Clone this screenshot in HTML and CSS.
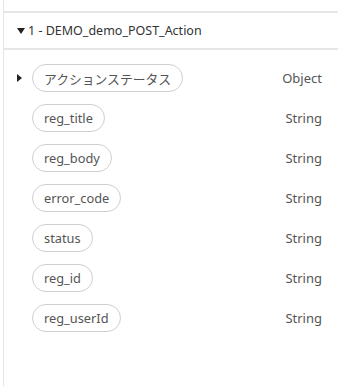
FILE: index.html
```html
<!DOCTYPE html>
<html lang="ja">
<head>
    <meta charset="UTF-8">
    <title>DEMO_demo_POST_Action</title>
    <link rel="stylesheet" href="styles.css">
</head>
<body>
    <div class="panel">
        <div class="group-header">
            <span class="caret down"></span>
            <span class="group-title">1 - DEMO_demo_POST_Action</span>
        </div>
        <ul class="fields">
            <li class="field">
                <span class="toggle"><span class="caret right"></span></span>
                <span class="pill">アクションステータス</span>
                <span class="type">Object</span>
            </li>
            <li class="field">
                <span class="toggle"></span>
                <span class="pill">reg_title</span>
                <span class="type">String</span>
            </li>
            <li class="field">
                <span class="toggle"></span>
                <span class="pill">reg_body</span>
                <span class="type">String</span>
            </li>
            <li class="field">
                <span class="toggle"></span>
                <span class="pill">error_code</span>
                <span class="type">String</span>
            </li>
            <li class="field">
                <span class="toggle"></span>
                <span class="pill">status</span>
                <span class="type">String</span>
            </li>
            <li class="field">
                <span class="toggle"></span>
                <span class="pill">reg_id</span>
                <span class="type">String</span>
            </li>
            <li class="field">
                <span class="toggle"></span>
                <span class="pill">reg_userId</span>
                <span class="type">String</span>
            </li>
        </ul>
    </div>
</body>
</html>
```

FILE: styles.css
```css
body {
    margin: 0;
    background-color: #fff;
    font-family: "Noto Sans", "Noto Sans CJK JP", sans-serif;
    font-size: 13px;
    color: #444;
}

.panel {
    margin-left: 3px;
    height: 386px;
    box-sizing: border-box;
    padding-top: 11px;
    border-left: 1px solid #e6e6e6;
}

.group-header {
    display: flex;
    align-items: center;
    height: 35px;
    padding-left: 13px;
    border-top: 2px solid #e4e6e8;
    border-bottom: 2px solid #e4e6e8;
}

.group-title {
    margin-left: 3px;
    font-size: 12.5px;
    color: #333;
}

.caret {
    display: inline-block;
    width: 0;
    height: 0;
}

.caret.down {
    border-left: 4.5px solid transparent;
    border-right: 4.5px solid transparent;
    border-top: 6px solid #222;
}

.caret.right {
    border-top: 4px solid transparent;
    border-bottom: 4px solid transparent;
    border-left: 5px solid #222;
}

.fields {
    list-style: none;
    margin: 0;
    padding: 14px 16px 0 13px;
    display: flex;
    flex-direction: column;
    gap: 12px;
}

.field {
    display: flex;
    align-items: center;
    height: 28px;
}

.toggle {
    display: flex;
    align-items: center;
    width: 15px;
}

.pill {
    display: flex;
    align-items: center;
    height: 28px;
    box-sizing: border-box;
    padding: 0 11px;
    border: 1px solid #cfcfcf;
    border-radius: 14px;
    font-size: 12.8px;
    color: #555;
}

.type {
    margin-left: auto;
    color: #555;
}
```
